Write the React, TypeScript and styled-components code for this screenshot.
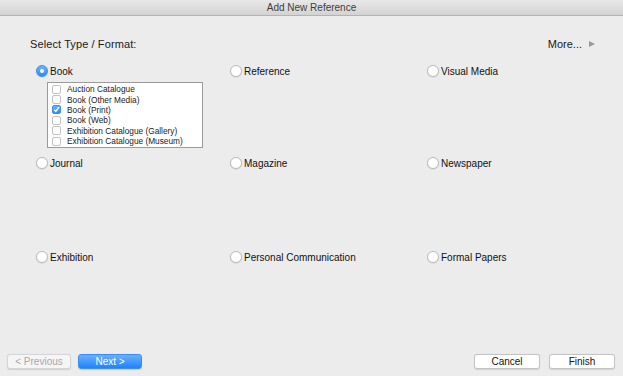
import styled, { createGlobalStyle } from 'styled-components';

const GlobalStyle = createGlobalStyle`
  html, body {
    margin: 0;
    padding: 0;
    background: #ececec;
  }
  body {
    font-family: 'Liberation Sans', Arial, sans-serif;
    color: #1a1a1a;
  }
`;

const subTypes = [
  { label: 'Auction Catalogue', checked: false },
  { label: 'Book (Other Media)', checked: false },
  { label: 'Book (Print)', checked: true },
  { label: 'Book (Web)', checked: false },
  { label: 'Exhibition Catalogue (Gallery)', checked: false },
  { label: 'Exhibition Catalogue (Museum)', checked: false },
];

const rows = [
  ['Book', 'Reference', 'Visual Media'],
  ['Journal', 'Magazine', 'Newspaper'],
  ['Exhibition', 'Personal Communication', 'Formal Papers'],
];

const App = () => {
  return (
    <>
      <GlobalStyle />
      <Window>
        <TitleBar>Add New Reference</TitleBar>
        <Content>
          <Header>
            <HeaderLabel>Select Type / Format:</HeaderLabel>
            <More>
              More...
              <Arrow />
            </More>
          </Header>
          <TypeGrid>
            {rows.map((row, ri) => (
              <TypeRow key={ri} tall={ri === 1}>
                {row.map((type) => (
                  <TypeCell key={type}>
                    <RadioLine>
                      <Radio selected={type === 'Book'} />
                      <RadioLabel>{type}</RadioLabel>
                    </RadioLine>
                    {type === 'Book' && (
                      <ListBox>
                        {subTypes.map((s) => (
                          <ListItem key={s.label}>
                            <Check checked={s.checked}>
                              {s.checked && (
                                <svg width="7" height="7" viewBox="0 0 7 7">
                                  <path d="M1 3.6 L2.8 5.4 L6 1.2" fill="none" stroke="#fff" strokeWidth="1.3" />
                                </svg>
                              )}
                            </Check>
                            {s.label}
                          </ListItem>
                        ))}
                      </ListBox>
                    )}
                  </TypeCell>
                ))}
              </TypeRow>
            ))}
          </TypeGrid>
        </Content>
        <Footer>
          <ButtonGroup gap={7}>
            <Button variant="disabled" w={64}>&lt; Previous</Button>
            <Button variant="primary" w={64}>Next &gt;</Button>
          </ButtonGroup>
          <ButtonGroup gap={9}>
            <Button variant="default" w={66}>Cancel</Button>
            <Button variant="default" w={66}>Finish</Button>
          </ButtonGroup>
        </Footer>
      </Window>
    </>
  );
};

const Window = styled.div`
  width: 623px;
  height: 376px;
  display: flex;
  flex-direction: column;
  background: #ececec;
`;

const TitleBar = styled.div`
  height: 15px;
  line-height: 15px;
  text-align: center;
  font-size: 10px;
  color: #3e3e3e;
  background: linear-gradient(#e8e8e8, #d3d3d3);
  border-bottom: 1px solid #b3b3b3;
`;

const Content = styled.div`
  flex: 1;
  padding: 21px 28px 0 30px;
  display: flex;
  flex-direction: column;
`;

const Header = styled.div`
  display: flex;
  justify-content: space-between;
  align-items: center;
  height: 14px;
`;

const HeaderLabel = styled.div`
  font-size: 11px;
  color: #1a1a1a;
  letter-spacing: 0.1px;
`;

const More = styled.div`
  display: flex;
  align-items: center;
  gap: 7px;
  font-size: 11px;
  color: #1a1a1a;
`;

const Arrow = styled.span`
  width: 0;
  height: 0;
  border-top: 3.5px solid transparent;
  border-bottom: 3.5px solid transparent;
  border-left: 6px solid #9a9a9a;
`;

const TypeGrid = styled.div`
  margin-top: 13px;
  margin-left: 6px;
  display: flex;
  flex-direction: column;
`;

const TypeRow = styled.div<{ tall: boolean }>`
  display: grid;
  grid-template-columns: 194px 197px 1fr;
  height: ${(p) => (p.tall ? 94 : 92)}px;
`;

const TypeCell = styled.div`
  display: flex;
  flex-direction: column;
`;

const RadioLine = styled.div`
  display: flex;
  align-items: center;
  gap: 2px;
  height: 14px;
`;

const Radio = styled.span<{ selected: boolean }>`
  box-sizing: border-box;
  width: 12px;
  height: 12px;
  border-radius: 50%;
  position: relative;
  background: ${(p) => (p.selected ? 'linear-gradient(#6cb4fb, #2a8afa)' : '#fff')};
  border: 1px solid ${(p) => (p.selected ? '#3f8fe6' : '#bcbcbc')};
  box-shadow: 0 0.5px 1px rgba(0, 0, 0, 0.15);

  &::after {
    content: '';
    display: ${(p) => (p.selected ? 'block' : 'none')};
    position: absolute;
    left: 3px;
    top: 3px;
    width: 4px;
    height: 4px;
    border-radius: 50%;
    background: #fff;
  }
`;

const RadioLabel = styled.span`
  font-size: 10px;
  color: #111;
`;

const ListBox = styled.div`
  box-sizing: border-box;
  margin-top: 4px;
  margin-left: 11px;
  width: 156px;
  height: 66px;
  background: #fff;
  border: 1px solid #9a9a9a;
  padding: 1px 0 0 4px;
  display: flex;
  flex-direction: column;
`;

const ListItem = styled.div`
  display: flex;
  align-items: center;
  gap: 6px;
  height: 10.4px;
  font-size: 8.3px;
  color: #1a1a1a;
  white-space: nowrap;
`;

const Check = styled.span<{ checked: boolean }>`
  box-sizing: border-box;
  width: 9px;
  height: 9px;
  border-radius: 2px;
  display: flex;
  align-items: center;
  justify-content: center;
  background: ${(p) => (p.checked ? 'linear-gradient(#6cb4fb, #2a8afa)' : '#fff')};
  border: 1px solid ${(p) => (p.checked ? '#3f8fe6' : '#c2c2c2')};
`;

const Footer = styled.div`
  display: flex;
  justify-content: space-between;
  padding: 0 8px 7px 7px;
`;

const ButtonGroup = styled.div<{ gap: number }>`
  display: flex;
  gap: ${(p) => p.gap}px;
`;

const Button = styled.button<{ variant: 'default' | 'primary' | 'disabled'; w: number }>`
  box-sizing: border-box;
  width: ${(p) => p.w}px;
  height: 15px;
  padding: 0;
  border-radius: 3px;
  font-family: 'Liberation Sans', Arial, sans-serif;
  font-size: 10px;
  line-height: 13px;
  text-align: center;
  border: 1px solid
    ${(p) => (p.variant === 'primary' ? '#3c8ef5' : p.variant === 'disabled' ? '#d6d6d6' : '#c4c4c4')};
  background: ${(p) =>
    p.variant === 'primary'
      ? 'linear-gradient(#6bb1fb, #1f83fb)'
      : p.variant === 'disabled'
      ? '#f5f5f5'
      : '#fff'};
  color: ${(p) => (p.variant === 'primary' ? '#fff' : p.variant === 'disabled' ? '#a8a8a8' : '#111')};
  box-shadow: 0 0.5px 1px rgba(0, 0, 0, 0.12);
`;

export default App;
